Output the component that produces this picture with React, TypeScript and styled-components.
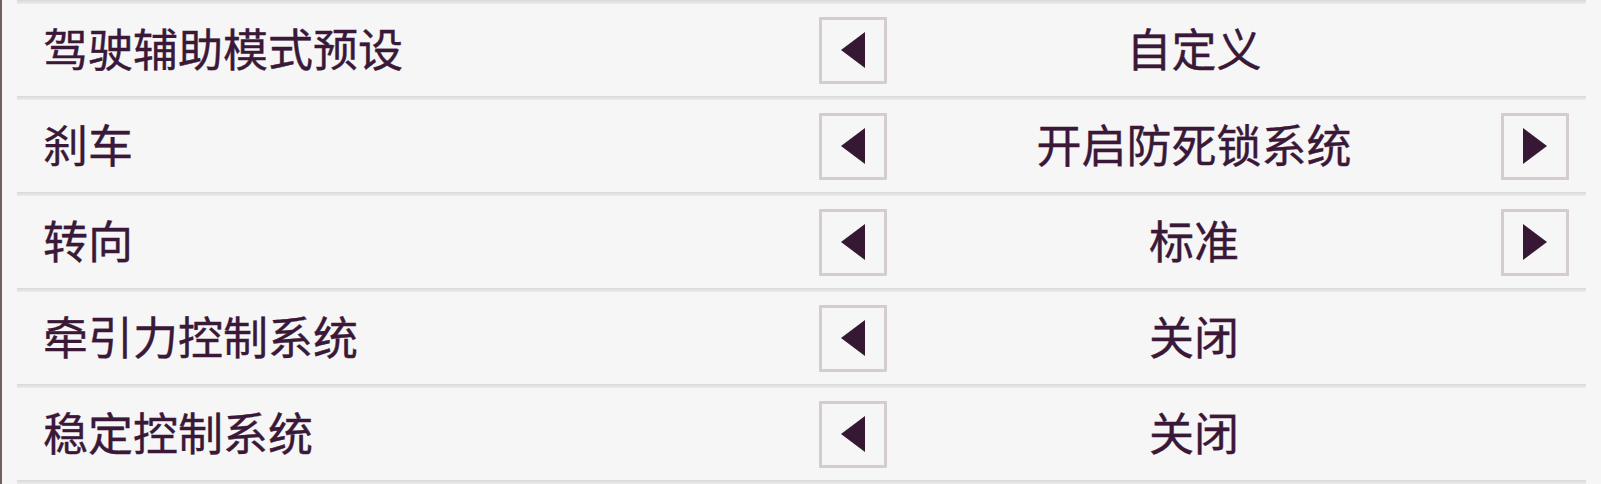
import React from "react";
import styled, { createGlobalStyle } from "styled-components";

const GlobalStyle = createGlobalStyle`
  html, body {
    margin: 0;
    padding: 0;
    background: #f6f6f6;
  }
  body {
    font-family: "Noto Sans CJK SC", "Noto Sans", sans-serif;
  }
`;

const List = styled.div`
  display: flex;
  flex-direction: column;
  width: 1601px;
  height: 484px;
  box-sizing: border-box;
  border-left: 2px solid #6c625e;
  background: #f6f6f6;
  overflow: hidden;
`;

const Separator = styled.div`
  height: 4px;
  margin: 0 15px 0 15px;
  background: linear-gradient(#d9d9d9 0%, #e2e2e2 50%, #ececec 100%);
  flex: none;
`;

const Row = styled.div`
  display: grid;
  grid-template-columns: 1fr 750px;
  align-items: center;
  height: 92px;
  padding: 0 32px 0 41px;
  flex: none;
`;

const Label = styled.div`
  font-size: 45px;
  font-weight: 400;
  line-height: 1;
  padding-bottom: 6px;
  color: #3a1838;
  -webkit-text-stroke: 0.4px #3a1838;
  white-space: nowrap;
`;

const Control = styled.div`
  display: grid;
  grid-template-columns: 68px 1fr 68px;
  align-items: center;
`;

const ArrowButton = styled.button<{ $hidden?: boolean }>`
  box-sizing: border-box;
  width: 68px;
  height: 67px;
  padding: 0;
  margin: 0;
  border: 3px solid #d4ccd2;
  border-radius: 1px;
  background: #f6f6f6;
  display: flex;
  align-items: center;
  justify-content: center;
  visibility: ${(p) => (p.$hidden ? "hidden" : "visible")};
  cursor: pointer;
`;

const Value = styled.div`
  font-size: 45px;
  font-weight: 400;
  line-height: 1;
  padding-bottom: 6px;
  color: #3a1838;
  -webkit-text-stroke: 0.4px #3a1838;
  text-align: center;
  white-space: nowrap;
`;

const Triangle = ({ dir }: { dir: "left" | "right" }) => (
  <svg width="24" height="36" viewBox="0 0 24 36">
    <polygon
      points={dir === "left" ? "24,0 0,18 24,36" : "0,0 24,18 0,36"}
      fill="#361734"
    />
  </svg>
);

type Item = { label: string; value: string; next: boolean };

const items: Item[] = [
  { label: "驾驶辅助模式预设", value: "自定义", next: false },
  { label: "刹车", value: "开启防死锁系统", next: true },
  { label: "转向", value: "标准", next: true },
  { label: "牵引力控制系统", value: "关闭", next: false },
  { label: "稳定控制系统", value: "关闭", next: false },
];

export default function App() {
  return (
    <>
      <GlobalStyle />
      <List>
        <Separator />
        {items.map((it) => (
          <React.Fragment key={it.label}>
            <Row>
              <Label>{it.label}</Label>
              <Control>
                <ArrowButton aria-label="上一个">
                  <Triangle dir="left" />
                </ArrowButton>
                <Value>{it.value}</Value>
                <ArrowButton aria-label="下一个" $hidden={!it.next}>
                  <Triangle dir="right" />
                </ArrowButton>
              </Control>
            </Row>
            <Separator />
          </React.Fragment>
        ))}
      </List>
    </>
  );
}
